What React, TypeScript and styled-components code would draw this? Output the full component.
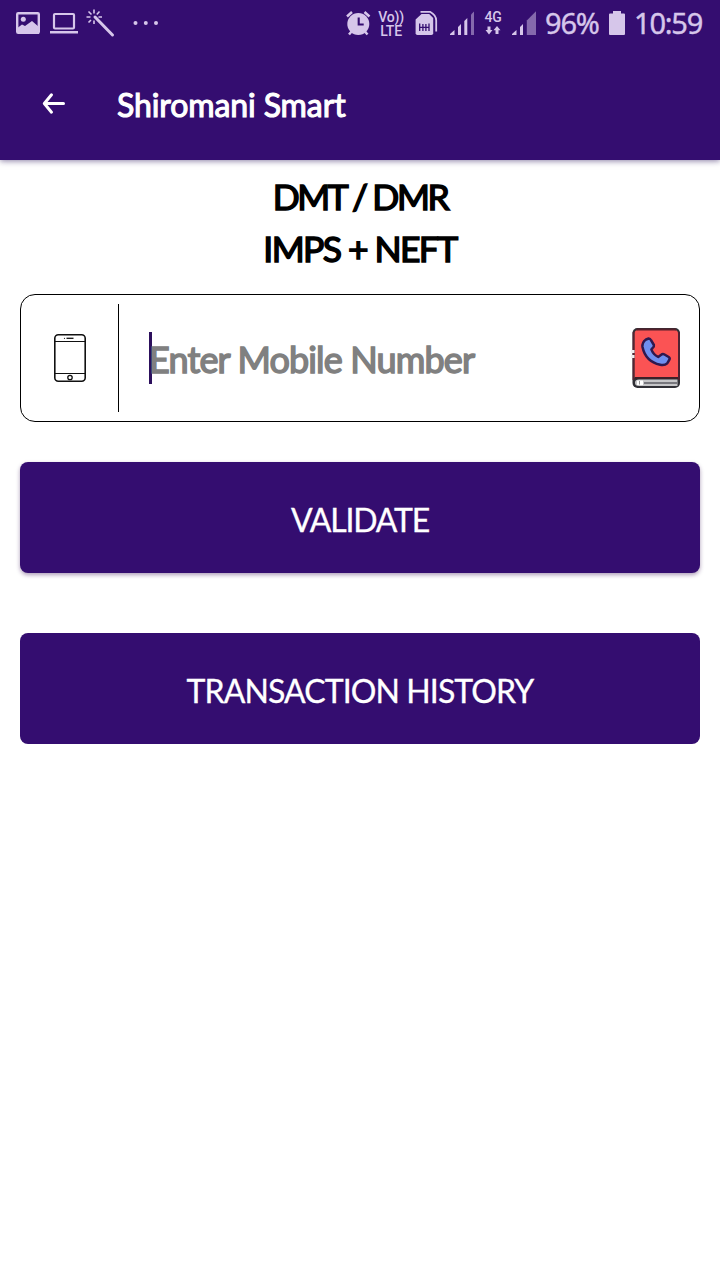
import React from 'react';
import styled, { createGlobalStyle } from 'styled-components';

const PURPLE = '#340d70';
const STATUS = '#d6c6ea';

const GlobalStyle = createGlobalStyle`
  * { box-sizing: border-box; }
  body { margin: 0; background: #fff; font-family: Lato, sans-serif; }
  svg { display: block; flex: none; }
`;

const Screen = styled.main`
  width: 720px;
  height: 1280px;
  background: #fff;
  overflow: hidden;
`;

const Header = styled.header`
  height: 160px;
  background: ${PURPLE};
  box-shadow: 0 1px 6px rgba(40, 20, 90, 0.55);
`;

const StatusBar = styled.div`
  height: 48px;
  padding: 0 18px 0 14px;
  display: flex;
  justify-content: space-between;
  color: ${STATUS};
`;

const StatusGroup = styled.div`
  display: flex;
  align-items: flex-start;
`;

const StatusText = styled.span<{ $width: number; $gap: number; $spacing: number }>`
  width: ${(p) => p.$width}px;
  margin-left: ${(p) => p.$gap}px;
  letter-spacing: ${(p) => p.$spacing}px;
  font: 400 29px/46px 'Noto Sans', sans-serif;
  -webkit-text-stroke: 0.4px currentColor;
  white-space: nowrap;
`;

const NetworkLabel = styled.span<{ $gap: number; $width: number }>`
  display: flex;
  flex-direction: column;
  align-items: center;
  width: ${(p) => p.$width}px;
  margin: 10px 0 0 ${(p) => p.$gap}px;
  font: 500 14px/14px Roboto, sans-serif;
  letter-spacing: -0.2px;
  white-space: nowrap;
`;

const TitleBar = styled.div`
  height: 112px;
  display: flex;
  align-items: center;
  padding: 3px 0 0 38px;
`;

const BackButton = styled.button`
  border: 0;
  padding: 0 0 5px;
  background: none;
  color: #fff;
  width: 79px;
`;

const Title = styled.h1`
  margin: 0;
  color: #fff;
  font-size: 32px;
  font-weight: 400;
  -webkit-text-stroke: 1.1px currentColor;
  line-height: 38px;
  padding-bottom: 1px;
  letter-spacing: -0.1px;
  white-space: nowrap;
`;

const Content = styled.section`
  padding: 11px 20px 0;
  display: flex;
  flex-direction: column;
`;

const Heading = styled.h2<{ $spacing: number }>`
  margin: 0;
  color: #000;
  font-size: 35.5px;
  font-weight: 400;
  -webkit-text-stroke: 1.5px currentColor;
  line-height: 52px;
  text-align: center;
  letter-spacing: ${(p) => p.$spacing}px;
`;

const Field = styled.div`
  height: 128px;
  margin-top: 19px;
  border: 1px solid #000;
  border-radius: 15px;
  display: flex;
  align-items: center;
  padding-right: 18px;
`;

const FieldIcon = styled.div`
  width: 98px;
  height: 108px;
  border-right: 1px solid #000;
  display: flex;
  align-items: center;
  justify-content: center;
`;

const Placeholder = styled.div`
  flex: 1;
  margin-left: 30px;
  height: 52px;
  border-left: 3px solid #2c0f5c;
  color: #808080;
  font-size: 36px;
  font-weight: 400;
  -webkit-text-stroke: 1.5px currentColor;
  line-height: 55px;
  letter-spacing: -0.85px;
  white-space: nowrap;
  text-indent: -3px;
`;

const Action = styled.button<{ $top: number; $spacing: number; $raised?: boolean }>`
  height: 111px;
  margin: ${(p) => p.$top}px 0 0;
  padding: 4px 0 0;
  border: 0;
  border-radius: 8px;
  background: ${PURPLE};
  color: #fff;
  font: 400 32px/40px Lato, sans-serif;
  -webkit-text-stroke: 0.3px currentColor;
  letter-spacing: ${(p) => p.$spacing}px;
  box-shadow: ${(p) => (p.$raised ? '0 2px 4px rgba(52, 13, 80, 0.4)' : 'none')};
`;

const LeftIcons = () => (
  <svg width="150" height="48" viewBox="14 0 150 48" fill="none" stroke="currentColor">
    <rect x="17.2" y="13.2" width="21.6" height="19.6" rx="1" strokeWidth="2.4" />
    <circle cx="23.3" cy="19.3" r="2.5" fill="currentColor" stroke="none" />
    <path d="M18 27.5l4-3 3 1.5 7-5 7 6v7H18z" fill="currentColor" stroke="none" />
    <rect x="54" y="14" width="20" height="14.5" rx="1" strokeWidth="2.2" />
    <path d="M50 31h28v2.5H50z" fill="currentColor" stroke="none" />
    <path d="M95 17l17.5 18" strokeWidth="3" strokeLinecap="round" />
    <path d="M94 9.5v4M88.5 11.5l3 3M86.5 17h4M88.5 22.5l2.5-2.5M94 20.5v3.5M99.5 11.5l-2.7 3M98.5 17h3.5" strokeWidth="1.6" />
    <g fill="currentColor" stroke="none">
      <circle cx="135.5" cy="23" r="2" /><circle cx="145.8" cy="23" r="2" /><circle cx="156" cy="23" r="2" />
    </g>
  </svg>
);

const AlarmIcon = () => (
  <svg width="25" height="48" viewBox="346 0 25 48">
    <circle cx="358.3" cy="24" r="11" fill="currentColor" />
    <path d="M347 16.5l5-4.5M369.5 16.5l-5-4.5M352 31l-3 3.5M364.5 31l3 3.5" stroke="currentColor" strokeWidth="2.5" />
    <path d="M358.7 17.5v7h5" fill="none" stroke={PURPLE} strokeWidth="2.1" />
  </svg>
);

const SimSvg = styled.svg`
  margin-left: 12px;
`;

const SimIcon = () => (
  <SimSvg width="23" height="48" viewBox="415 0 23 48">
    <path d="M421.5 14h7.7l4 4v15.2q0 1.8-1.8 1.8h-14q-1.8 0-1.8-1.8V19.5z" fill="currentColor" />
    <path d="M420.5 11.8h9.5q6.2 3.3 6.2 8.7v11" fill="none" stroke="currentColor" strokeWidth="1.8" />
    <path d="M419.7 23.5v7.5M429 23.5v7.5M422.9 24v7M425.900 24v7M419.500 27.300h9.500" fill="none" stroke={PURPLE} strokeWidth="1.3" />
  </SimSvg>
);

const SignalIcon = styled.svg<{ $gap: number }>`
  margin-left: ${(p) => p.$gap}px;
`;

const Signal = ({ gap, weak }: { gap: number; weak?: boolean }) => (
  <SignalIcon $gap={gap} width="25" height="48" viewBox="0 0 25 48" fill="currentColor">
    <path d="M0 35v-1l4.5-4v5zM8 35v-8l3-3V35z" />
    {weak ? (
      <path d="M14.8 35V20.5L24 11.3V35z" opacity=".5" />
    ) : (
      <>
        <path d="M14.3 35V21l3-3V35z" />
        <path d="M21 35V14.5l3-3V35z" opacity=".5" />
      </>
    )}
  </SignalIcon>
);

const DataArrows = () => (
  <svg width="16" height="12" viewBox="0 0 16 12" fill="currentColor">
    <path d="M2.500 2.500h3v3.500h2L4 10.500 .5 6h2zM10.500 10V6.200h-2L12 2l3.500 4.200h-2V10z" />
  </svg>
);

const BatterySvg = styled.svg`
  margin-left: 10px;
`;

const BatteryIcon = () => (
  <BatterySvg width="17" height="48" viewBox="0 0 17 48">
    <path d="M4 11h8v2.5h3q1 0 1 1V34q0 1-1 1H1q-1 0-1-1V14.5q0-1 1-1h3z" fill="currentColor" />
  </BatterySvg>
);

const BackIcon = () => (
  <svg width="32" height="32" viewBox="0 0 32 32" fill="none" stroke="currentColor" strokeWidth="3" strokeLinecap="round" strokeLinejoin="round">
    <path d="M25.500 16.500H7M13.500 7.800L6.300 16.500l7.200 8.700" />
  </svg>
);

const PhoneIcon = () => (
  <svg width="32" height="48" viewBox="0 0 32 48" fill="none" stroke="#111">
    <rect x=".8" y=".8" width="30.4" height="46.4" rx="3.5" strokeWidth="1.6" />
    <path d="M1 7.5h30M1 39.5h30" strokeWidth="1.1" />
    <path d="M12.5 4.3h7" strokeWidth="1.3" />
    <circle cx="10.5" cy="4.3" r=".6" fill="#111" stroke="none" />
    <circle cx="16" cy="43.5" r="2.2" strokeWidth="1.3" />
  </svg>
);

const PhoneBookIcon = () => (
  <svg width="50" height="62" viewBox="0 0 50 62">
    <rect x="1.5" y="1" width="47.5" height="60" rx="5" fill="#303036" />
    <path d="M3.5 6.5q0-3.5 3.5-3.5h36.5q3.500 0 3.500 3.500v44H3.500z" fill="#fb5354" />
    <path d="M2.5 5v48M48 5v48" stroke="#542332" strokeWidth="1.8" />
    <path d="M5.5 2.5h39.5" stroke="#54202c" strokeWidth="2" />
    <path d="M46.5 52.5H8q-4 0-4 3.300t4 3.300h38.500z" fill="#c6c6c8" />
    <path d="M13 56h33" stroke="#77777d" strokeWidth="1.8" />
    <path d="M6 55.800h6" stroke="#fff" strokeWidth="4.5" />
    <path d="M8.5 54v3.5" stroke="#999" />
    <path d="M4 51h43" stroke="#3d2028" strokeWidth="2" />
    <path d="M0 24.5h3.5M0 29.5h3.5" stroke="#eee" strokeWidth="3" />
    <path d="M15 12.5l2.700-1q1.500 0 2.500 2l2.700 4.500q.5 1.700-1.500 3.200l-1 1.400q2 5 6.800 7.300l3-2.200q1.500-1.300 3.300-.2l4.200 2.500q1.700 1.200.5 3l-2 3.300q-2.500 2.500-7 1.500Q14.500 34.500 11.500 20q-.6-4.500 3.500-7.500z" fill="#6f8ff0" stroke="#30184e" strokeWidth="2.5" strokeLinejoin="round" />
  </svg>
);

export default function App() {
  return (
    <Screen>
      <GlobalStyle />
      <Header>
        <StatusBar>
          <StatusGroup><LeftIcons /></StatusGroup>
          <StatusGroup>
            <AlarmIcon />
            <NetworkLabel $gap={8} $width={24}><span>Vo))</span><span>LTE</span></NetworkLabel>
            <SimIcon />
            <Signal gap={12} />
            <NetworkLabel $gap={8} $width={20}><span>4G</span><DataArrows /></NetworkLabel>
            <Signal gap={9} weak />
            <StatusText $gap={8} $width={54} $spacing={-1.2}>96%</StatusText>
            <BatteryIcon />
            <StatusText $gap={8} $width={68} $spacing={-1.2}>10:59</StatusText>
          </StatusGroup>
        </StatusBar>
        <TitleBar>
          <BackButton aria-label="Back"><BackIcon /></BackButton>
          <Title>Shiromani Smart</Title>
        </TitleBar>
      </Header>
      <Content>
        <Heading $spacing={-2.4}>DMT / DMR</Heading>
        <Heading $spacing={-1.6}>IMPS + NEFT</Heading>
        <Field>
          <FieldIcon><PhoneIcon /></FieldIcon>
          <Placeholder>Enter Mobile Number</Placeholder>
          <PhoneBookIcon />
        </Field>
        <Action $top={40} $spacing={-1.2} $raised>VALIDATE</Action>
        <Action $top={60} $spacing={-0.9}>TRANSACTION HISTORY</Action>
      </Content>
    </Screen>
  );
}
